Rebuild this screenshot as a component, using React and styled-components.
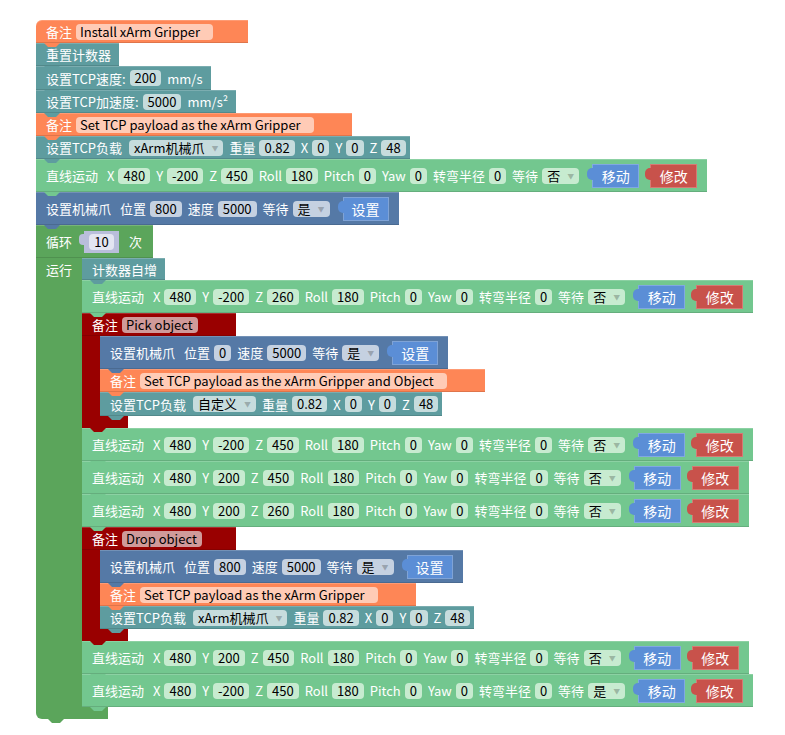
import React from 'react';
import styled, { createGlobalStyle } from 'styled-components';

const GlobalStyle = createGlobalStyle`
  html, body { margin: 0; padding: 0; background: #fff; }
  body { font-family: "Noto Sans CJK SC", "Noto Sans", sans-serif; }
`;

const C = {
  orange: { bg: '#fe8656', field: '#ffcbb6' },
  teal: { bg: '#5e9c9f', field: '#c6dcdd' },
  green: { bg: '#73c78f', field: '#c7ebd0' },
  slate: { bg: '#5579a6', field: '#c5d1e1' },
  dark: { bg: '#990000', field: '#d09a9a' },
  loop: { bg: '#5ba55b' },
  moveBtn: { bg: '#5b8ed6', border: '#80a8e2' },
  editBtn: { bg: '#c8524b', border: '#d67a74' },
  setBtn: { bg: '#5b8ed6', border: '#7fa3d6' },
};

const Canvas = styled.div`
  padding: 20px 0 20px 36px;
`;

const Stack = styled.div`
  display: flex;
  flex-direction: column;
  align-items: flex-start;
`;

const Block = styled.div`
  position: relative;
  display: flex;
  align-items: center;
  gap: 4px;
  box-sizing: border-box;
  height: ${(p) => p.$h || 23}px;
  min-width: ${(p) => p.$minW || 0}px;
  padding: 0 ${(p) => (p.$pr ?? 8)}px 0 10px;
  background: ${(p) => p.$bg};
  color: #fff;
  font-size: 13px;
  white-space: nowrap;
  border-top-left-radius: ${(p) => (p.$round ? 6 : 0)}px;
  box-shadow: inset 0 1px 0 rgba(255, 255, 255, 0.18), inset 0 -1px 0 rgba(0, 0, 0, 0.12);
  &::after {
    content: '';
    display: ${(p) => (p.$noTab ? 'none' : 'block')};
    position: absolute;
    left: 8px;
    bottom: -4px;
    width: 16px;
    height: 4px;
    background: ${(p) => p.$bg};
    clip-path: polygon(0 0, 100% 0, 75% 100%, 25% 100%);
    z-index: 1;
  }
`;

const Title = styled.span`
  margin-right: ${(p) => p.$gap ?? 0}px;
`;

const Field = styled.span`
  display: inline-flex;
  align-items: center;
  height: 16px;
  box-sizing: border-box;
  padding: 0 ${(p) => p.$pr ?? 5}px 0 ${(p) => p.$pl ?? 5}px;
  margin-right: ${(p) => p.$mr ?? 2}px;
  border-radius: 4px;
  background: ${(p) => p.$bg};
  color: #000;
  font-size: 13px;
  line-height: 16px;
`;

const Arrow = styled.span`
  margin-left: 7px;
  font-size: 7px;
  color: rgba(0, 0, 0, 0.22);
`;

const Btn = styled.span`
  position: relative;
  display: inline-flex;
  align-items: center;
  justify-content: center;
  box-sizing: border-box;
  height: 24px;
  width: ${(p) => p.$w || 47}px;
  margin-left: 7px;
  background: ${(p) => p.$bg};
  border: 1px solid ${(p) => p.$border};
  color: #fff;
  font-size: 14px;
  &::before {
    content: '';
    position: absolute;
    left: -6px;
    top: 3px;
    width: 6px;
    height: 12px;
    background: ${(p) => p.$bg};
    border-radius: 5px 0 0 5px;
  }
`;

const Num = styled.span`
  position: relative;
  display: inline-flex;
  align-items: center;
  justify-content: center;
  height: 22px;
  width: 35px;
  margin: 0 6px 0 8px;
  background: #b9bedb;
  &::before {
    content: '';
    position: absolute;
    left: -5px;
    top: 3px;
    width: 5px;
    height: 11px;
    background: #b9bedb;
    border-radius: 4px 0 0 4px;
  }
`;

const NumField = styled.span`
  display: inline-flex;
  align-items: center;
  height: 16px;
  padding: 0 5px;
  border-radius: 4px;
  background: #e3e5f1;
  color: #000;
  font-size: 13px;
`;

const CWrap = styled.div`
  display: flex;
  flex-direction: column;
  align-items: flex-start;
`;

const CBody = styled.div`
  display: flex;
  align-items: stretch;
`;

const CArm = styled.div`
  width: ${(p) => p.$w}px;
  background: ${(p) => p.$bg};
  color: #fff;
  font-size: 13px;
  box-sizing: border-box;
  padding: 2px 0 0 10px;
`;

const CFoot = styled.div`
  position: relative;
  width: ${(p) => p.$w}px;
  height: 12px;
  background: ${(p) => p.$bg};
  border-bottom-left-radius: ${(p) => p.$r || 0}px;
  &::after {
    content: '';
    position: absolute;
    left: ${(p) => p.$tabLeft || 8}px;
    bottom: -4px;
    width: 16px;
    height: 4px;
    background: ${(p) => p.$bg};
    clip-path: polygon(0 0, 100% 0, 75% 100%, 25% 100%);
    z-index: 1;
  }
`;

const Dropdown = ({ bg, children }) => (
  <Field $bg={bg}>
    {children}
    <Arrow>▼</Arrow>
  </Field>
);

const Comment = ({ text, round, pr = 38 }) => (
  <Block $bg={C.orange.bg} $round={round} $pr={pr}>
    <span>备注</span>
    <Field $bg={C.orange.field} $pl={4} $pr={13} $mr={0}>{text}</Field>
  </Block>
);

const MoveRow = ({ x, y, z, roll, pitch, yaw, r, wait }) => {
  const f = C.green.field;
  return (
    <Block $bg={C.green.bg} $h={33} $pr={10}>
      <Title $gap={5}>直线运动</Title>
      <span>X</span><Field $bg={f}>{x}</Field>
      <span>Y</span><Field $bg={f}>{y}</Field>
      <span>Z</span><Field $bg={f}>{z}</Field>
      <span>Roll</span><Field $bg={f}>{roll}</Field>
      <span>Pitch</span><Field $bg={f}>{pitch}</Field>
      <span>Yaw</span><Field $bg={f}>{yaw}</Field>
      <span>转弯半径</span><Field $bg={f}>{r}</Field>
      <span>等待</span><Dropdown bg={f}>{wait}</Dropdown>
      <Btn $bg={C.moveBtn.bg} $border={C.moveBtn.border}>移动</Btn>
      <Btn $bg={C.editBtn.bg} $border={C.editBtn.border}>修改</Btn>
    </Block>
  );
};

const GripperRow = ({ pos, speed, wait }) => {
  const f = C.slate.field;
  return (
    <Block $bg={C.slate.bg} $h={33} $pr={10}>
      <Title $gap={5}>设置机械爪</Title>
      <span>位置</span><Field $bg={f}>{pos}</Field>
      <span>速度</span><Field $bg={f}>{speed}</Field>
      <span>等待</span><Dropdown bg={f}>{wait}</Dropdown>
      <Btn $bg={C.setBtn.bg} $border={C.setBtn.border} $w={46}>设置</Btn>
    </Block>
  );
};

const PayloadRow = ({ mode, w, x, y, z, h = 23 }) => {
  const f = C.teal.field;
  return (
    <Block $bg={C.teal.bg} $h={h} $pr={2}>
      <Title $gap={3}>设置TCP负载</Title>
      <Dropdown bg={f}>{mode}</Dropdown>
      <span>重量</span><Field $bg={f}>{w}</Field>
      <span>X</span><Field $bg={f}>{x}</Field>
      <span>Y</span><Field $bg={f}>{y}</Field>
      <span>Z</span><Field $bg={f}>{z}</Field>
    </Block>
  );
};

const CommentC = ({ text, children }) => (
  <CWrap>
    <Block $bg={C.dark.bg} $minW={154} $noTab>
      <span>备注</span>
      <Field $bg={C.dark.field} $pl={4}>{text}</Field>
    </Block>
    <CBody>
      <CArm $w={18} $bg={C.dark.bg} />
      <Stack>{children}</Stack>
    </CBody>
    <CFoot $w={46} $bg={C.dark.bg} />
  </CWrap>
);

export default function App() {
  const t = C.teal;
  return (
    <>
      <GlobalStyle />
      <Canvas>
        <Stack>
          <Comment text="Install xArm Gripper" round pr={35} />
          <Block $bg={t.bg}>重置计数器</Block>
          <Block $bg={t.bg} $h={24}>
            <span>设置TCP速度:</span>
            <Field $bg={t.field}>200</Field>
            <span>mm/s</span>
          </Block>
          <Block $bg={t.bg}>
            <span>设置TCP加速度:</span>
            <Field $bg={t.field}>5000</Field>
            <span>mm/s²</span>
          </Block>
          <Comment text="Set TCP payload as the xArm Gripper" />
          <PayloadRow mode="xArm机械爪" w="0.82" x="0" y="0" z="48" />
          <MoveRow x="480" y="-200" z="450" roll="180" pitch="0" yaw="0" r="0" wait="否" />
          <GripperRow pos="800" speed="5000" wait="是" />

          <CWrap>
            <Block $bg={C.loop.bg} $h={33} $minW={117} $noTab>
              <span>循环</span>
              <Num><NumField>10</NumField></Num>
              <span>次</span>
            </Block>
            <CBody>
              <CArm $w={46} $bg={C.loop.bg}>运行</CArm>
              <Stack>
                <Block $bg={t.bg} $h={22}>计数器自增</Block>
                <MoveRow x="480" y="-200" z="260" roll="180" pitch="0" yaw="0" r="0" wait="否" />
                <CommentC text="Pick object">
                  <GripperRow pos="0" speed="5000" wait="是" />
                  <Comment text="Set TCP payload as the xArm Gripper and Object" />
                  <PayloadRow mode="自定义" w="0.82" x="0" y="0" z="48" h={24} />
                </CommentC>
                <MoveRow x="480" y="-200" z="450" roll="180" pitch="0" yaw="0" r="0" wait="否" />
                <MoveRow x="480" y="200" z="450" roll="180" pitch="0" yaw="0" r="0" wait="否" />
                <MoveRow x="480" y="200" z="260" roll="180" pitch="0" yaw="0" r="0" wait="否" />
                <CommentC text="Drop object">
                  <GripperRow pos="800" speed="5000" wait="是" />
                  <Comment text="Set TCP payload as the xArm Gripper" />
                  <PayloadRow mode="xArm机械爪" w="0.82" x="0" y="0" z="48" />
                </CommentC>
                <MoveRow x="480" y="200" z="450" roll="180" pitch="0" yaw="0" r="0" wait="否" />
                <MoveRow x="480" y="-200" z="450" roll="180" pitch="0" yaw="0" r="0" wait="是" />
              </Stack>
            </CBody>
            <CFoot $w={72} $bg={C.loop.bg} $r={6} $tabLeft={12} />
          </CWrap>
        </Stack>
      </Canvas>
    </>
  );
}
